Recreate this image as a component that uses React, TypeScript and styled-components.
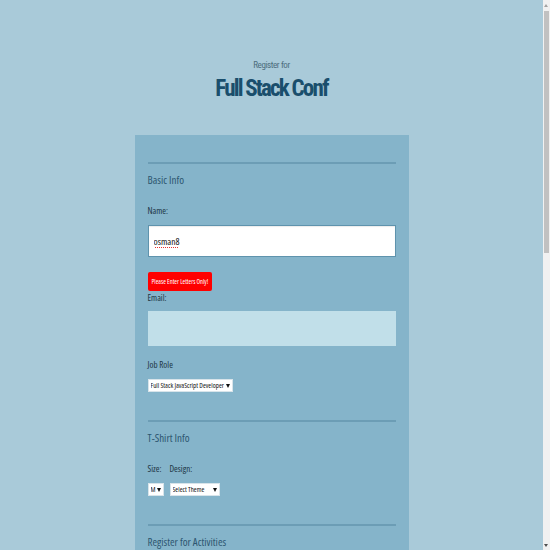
import React from "react";
import styled, { createGlobalStyle } from "styled-components";

const FONT = `"Open Sans", "Roboto Condensed", sans-serif`;
const TITLE_FONT = `"Roboto Condensed", Roboto, sans-serif`;

const GlobalStyle = createGlobalStyle`
  html, body { margin: 0; padding: 0; }
  body {
    background: #a9cad9;
    font-family: ${FONT};
    font-stretch: 75%;
    color: #1c3a4c;
  }
`;

const Page = styled.div`
  padding: 58px 7px 0 0;
`;

const Header = styled.header`
  text-align: center;
  margin-bottom: 32px;
`;

const Kicker = styled.p`
  margin: 0;
  font-family: ${TITLE_FONT};
  font-size: 9px;
  line-height: 14px;
  letter-spacing: -0.4px;
  color: #4d6d7d;
`;

const Title = styled.h1`
  margin: 3px 0 0;
  font-family: ${TITLE_FONT};
  font-size: 23px;
  line-height: 28px;
  font-weight: 700;
  letter-spacing: -1.8px;
  color: #1a4e6c;
`;

const Panel = styled.form`
  box-sizing: border-box;
  width: 274px;
  min-height: 1069px;
  margin: 0 auto;
  padding: 27px 13px 40px;
  background: #85b4ca;
`;

const Section = styled.fieldset<{ $gapAfter?: number }>`
  margin: 0 0 ${(p) => p.$gapAfter ?? 28}px;
  padding: 8px 0 0;
  border: none;
  border-top: 2px solid #6c9db5;
  min-width: 0;
`;

const Legend = styled.h2`
  margin: 0 0 16px;
  font-size: 11px;
  line-height: 16px;
  font-weight: 400;
  color: #2d5670;
`;

const Label = styled.label<{ $gap?: number; $tight?: boolean }>`
  display: block;
  font-size: 9px;
  line-height: ${(p) => (p.$tight ? 13 : 14)}px;
  color: #1c3444;
  margin-bottom: ${(p) => p.$gap ?? 7}px;
`;

const TextInput = styled.input<{ $filled?: boolean; $h: number }>`
  display: block;
  box-sizing: border-box;
  width: 100%;
  height: ${(p) => p.$h}px;
  margin: 0;
  padding: 0 5px;
  font-family: ${FONT};
  font-stretch: 75%;
  font-size: 9.5px;
  color: #111;
  outline: none;
  background: ${(p) => (p.$filled ? "#ffffff" : "#c1dfe9")};
  border: ${(p) => (p.$filled ? "1px solid #5f93ad" : "none")};
  box-shadow: ${(p) => (p.$filled ? "inset 0 1px 1px rgba(0,0,0,0.08)" : "none")};
  text-decoration-line: ${(p) => (p.$filled ? "underline" : "none")};
  text-decoration-style: dotted;
  text-decoration-color: #e53030;
  text-underline-offset: 2px;
`;

const ErrorBadge = styled.div`
  display: inline-flex;
  align-items: center;
  height: 19px;
  margin-top: 15px;
  padding: 0 4px;
  border-radius: 2px;
  background: #ff0000;
  color: #fff;
  font-size: 6.5px;
`;

const Block = styled.div<{ $mb?: number }>`
  margin-bottom: ${(p) => p.$mb ?? 0}px;
`;

const SelectWrap = styled.span<{ $w: number }>`
  position: relative;
  display: flex;
  width: ${(p) => p.$w}px;
  height: 13px;
  &::after {
    content: "";
    position: absolute;
    right: 3px;
    top: 5px;
    border-left: 2px solid transparent;
    border-right: 2px solid transparent;
    border-top: 4px solid #111;
    pointer-events: none;
  }
`;

const Select = styled.select`
  appearance: none;
  -webkit-appearance: none;
  box-sizing: border-box;
  width: 100%;
  height: 13px;
  margin: 0;
  padding: 0 0 0 2px;
  border: 1px solid #d8e4ea;
  border-radius: 0;
  background: #fff;
  color: #111;
  font-family: ${FONT};
  font-stretch: 75%;
  font-size: 7px;
  line-height: 11px;
  outline: none;
`;

const Row = styled.div`
  display: flex;
  gap: 6px;
`;

const Col = styled.div``;

const ScrollTrack = styled.div`
  position: fixed;
  top: 0;
  right: 0;
  width: 7px;
  height: 100vh;
  background: #f1f1f1;
`;

const ScrollThumb = styled.div`
  position: absolute;
  left: 1px;
  right: 1px;
  top: 11px;
  height: 242px;
  background: #c1c1c1;
`;

const ScrollArrow = styled.div<{ $down?: boolean }>`
  position: absolute;
  left: 1px;
  ${(p) => (p.$down ? "bottom: 3px;" : "top: 4px;")}
  border-left: 2.5px solid transparent;
  border-right: 2.5px solid transparent;
  ${(p) =>
    p.$down
      ? "border-top: 3px solid #505050;"
      : "border-bottom: 3px solid #a3a3a3;"}
`;

export default function App() {
  return (
    <>
      <GlobalStyle />
      <Page>
        <Header>
          <Kicker>Register for</Kicker>
          <Title>Full Stack Conf</Title>
        </Header>
        <Panel onSubmit={(e) => e.preventDefault()}>
          <Section>
            <Legend>Basic Info</Legend>
            <Label htmlFor="name">Name:</Label>
            <TextInput id="name" $filled $h={32} defaultValue="osman8" spellCheck />
            <ErrorBadge>Please Enter Letters Only!</ErrorBadge>
            <Label htmlFor="mail" $tight $gap={7}>Email:</Label>
            <Block $mb={12}>
              <TextInput id="mail" $h={35} />
            </Block>
            <Label htmlFor="title">Job Role</Label>
            <SelectWrap $w={85}>
              <Select id="title" defaultValue="full-stack">
                <option value="full-stack">Full Stack JavaScript Developer</option>
                <option value="front-end">Front End Developer</option>
                <option value="back-end">Back End Developer</option>
                <option value="designer">Designer</option>
                <option value="student">Student</option>
                <option value="other">Other</option>
              </Select>
            </SelectWrap>
          </Section>

          <Section>
            <Legend>T-Shirt Info</Legend>
            <Row>
              <Col>
                <Label htmlFor="size">Size:</Label>
                <SelectWrap $w={16}>
                  <Select id="size" defaultValue="medium">
                    <option value="small">S</option>
                    <option value="medium">M</option>
                    <option value="large">L</option>
                    <option value="xlarge">XL</option>
                  </Select>
                </SelectWrap>
              </Col>
              <Col>
                <Label htmlFor="design">Design:</Label>
                <SelectWrap $w={50}>
                  <Select id="design" defaultValue="">
                    <option value="">Select Theme</option>
                    <option value="js puns">Theme - JS Puns</option>
                    <option value="heart js">Theme - I ♥ JS</option>
                  </Select>
                </SelectWrap>
              </Col>
            </Row>
          </Section>

          <Section>
            <Legend>Register for Activities</Legend>
          </Section>
        </Panel>
      </Page>
      <ScrollTrack aria-hidden>
        <ScrollArrow />
        <ScrollThumb />
        <ScrollArrow $down />
      </ScrollTrack>
    </>
  );
}
